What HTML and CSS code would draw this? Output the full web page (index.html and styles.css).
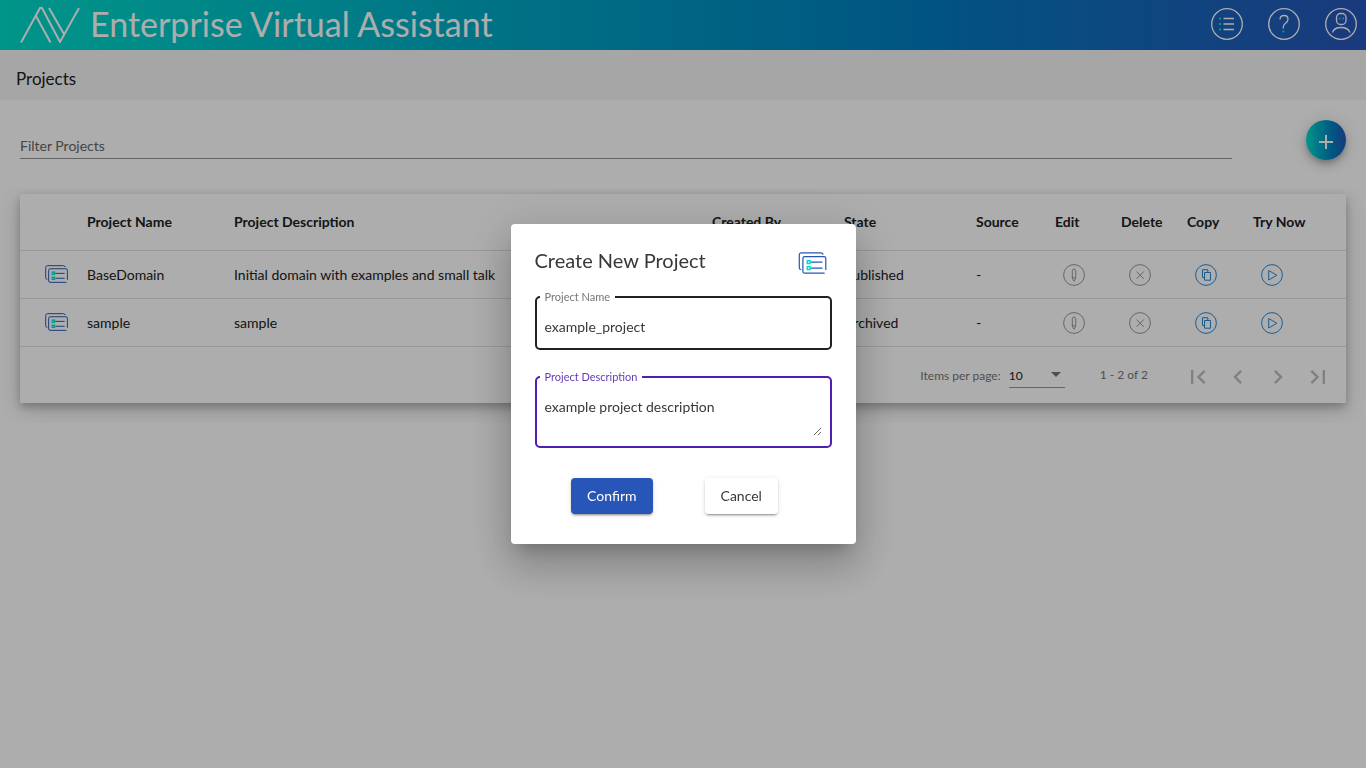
FILE: index.html
```html
<!DOCTYPE html>
<html lang="en">
<head>
<meta charset="utf-8">
<meta name="viewport" content="width=device-width, initial-scale=1">
<title>Enterprise Virtual Assistant</title>
<link rel="stylesheet" href="styles.css">
</head>
<body>
<svg class="sprite" aria-hidden="true">
  <symbol id="project" viewBox="0 0 28 22">
    <g fill="none" stroke="#2755b8" stroke-width="1.2" stroke-linecap="round" stroke-linejoin="round">
      <path d="M24.5 2.2Q24 .8 22.500 .8H3Q.8 .8 .8 3V15.500Q.8 17.500 2.300 17.500"/>
      <path d="M25.700 21.200H6.200Q4.400 21.200 4.400 19.400V6.400Q4.400 4.600 6.200 4.600H25.400Q27.300 4.600 27.300 6.400V17.600"/>
      <path d="M13 10.200h10.500M13 16.200h10.500"/>
    </g>
    <g fill="none" stroke="#00dfc6" stroke-width="1.500"><path d="M8.800 8.700h2.800v2.800H8.800zM8.800 14.700h2.800v2.800H8.800z"/></g>
  </symbol>
  <symbol id="edit" viewBox="0 0 22 22">
    <g fill="none" stroke="currentColor" stroke-width="1"><circle cx="11" cy="11" r="10.400"/><path d="M9.300 6.500Q9.300 5.200 11 5.200T12.700 6.500V14L11 17.300 9.300 14zM9.300 13.800h3.400"/></g>
  </symbol>
  <symbol id="delete" viewBox="0 0 22 22">
    <g fill="none" stroke="currentColor" stroke-width="1"><circle cx="11" cy="11" r="10.400"/><path d="M7.500 7.500l7.300 7.300M14.800 7.500l-7.300 7.300"/></g>
  </symbol>
  <symbol id="copy" viewBox="0 0 22 22">
    <g fill="none" stroke="currentColor" stroke-width="1"><circle cx="11" cy="11" r="10.400"/><path d="M9.500 13.500h-2V5.700h5.300v2.600M9.500 8.500h6v7.700h-6z"/></g>
  </symbol>
  <symbol id="play" viewBox="0 0 22 22">
    <g fill="none" stroke="currentColor" stroke-width="1" stroke-linejoin="round"><circle cx="11" cy="11" r="10.400"/><path d="M7.700 6.500v9.500l8.200-4.700z"/></g>
  </symbol>
</svg>

<header class="topbar">
  <svg class="logo" viewBox="0 0 60 36" aria-hidden="true"><path d="M1 35.500L20 1h2L40 35 59 1M16 9L30.500 35.500M29 1L44.500 28"/></svg>
  <h1 class="brand">Enterprise Virtual Assistant</h1>
  <nav class="tools" aria-label="Tools">
    <button class="tool" type="button" aria-label="Menu"><svg viewBox="0 0 32 32"><circle cx="16" cy="16" r="15.300"/><path d="M12.500 10.500h10.500M12.500 16h10.500M12.500 21.500h10.500"/><path class="accent" d="M8 10.500h2M8 16h2M8 21.500h2"/></svg></button>
    <button class="tool" type="button" aria-label="Help"><svg viewBox="0 0 32 32"><circle cx="16" cy="16" r="15.300"/><path d="M12 11.500Q12 7.500 16 7.500T20 11.300Q20 13.500 17.500 15.200Q15.300 16.700 15.300 19V20.500"/><path class="accent" d="M15.300 22.500v2"/></svg></button>
    <button class="tool" type="button" aria-label="Account"><svg viewBox="0 0 32 32"><circle cx="16" cy="16" r="15.300"/><rect x="11.500" y="5.500" width="9.500" height="11" rx="4"/><path d="M7.500 24.500Q9 19.500 16 19.500T25 24.500"/><path class="accent" d="M14 10.500h1.500M17.500 10.500H19"/></svg></button>
  </nav>
</header>
<div class="crumb"><h2 class="crumb-title">Projects</h2></div>

<main>
  <div class="filterbar">
    <input class="filter" type="text" placeholder="Filter Projects" aria-label="Filter Projects">
    <button class="add" type="button" aria-label="Add project"><svg viewBox="0 0 14 14"><path d="M7 0v14M0 7h14"/></svg></button>
  </div>

  <section class="card">
    <table class="projects">
      <colgroup><col class="col-icon"><col class="col-name"><col><col class="col-meta"><col class="col-meta"><col class="col-source"><col class="col-action"><col class="col-action"><col class="col-action"><col class="col-last"></colgroup>
      <thead>
        <tr><th></th><th>Project Name</th><th>Project Description</th><th>Created By</th><th>State</th><th>Source</th><th>Edit</th><th>Delete</th><th>Copy</th><th>Try Now</th></tr>
      </thead>
      <tbody>
        <tr>
          <td><svg class="row-icon"><use href="#project"/></svg></td><td>BaseDomain</td><td>Initial domain with examples and small talk</td><td></td><td>Published</td><td>-</td>
          <td><button class="act muted" type="button" aria-label="Edit BaseDomain"><svg><use href="#edit"/></svg></button></td>
          <td><button class="act muted" type="button" aria-label="Delete BaseDomain"><svg><use href="#delete"/></svg></button></td>
          <td><button class="act" type="button" aria-label="Copy BaseDomain"><svg><use href="#copy"/></svg></button></td>
          <td><button class="act" type="button" aria-label="Try BaseDomain"><svg><use href="#play"/></svg></button></td>
        </tr>
        <tr>
          <td><svg class="row-icon"><use href="#project"/></svg></td><td>sample</td><td>sample</td><td></td><td>Archived</td><td>-</td>
          <td><button class="act muted" type="button" aria-label="Edit sample"><svg><use href="#edit"/></svg></button></td>
          <td><button class="act muted" type="button" aria-label="Delete sample"><svg><use href="#delete"/></svg></button></td>
          <td><button class="act" type="button" aria-label="Copy sample"><svg><use href="#copy"/></svg></button></td>
          <td><button class="act" type="button" aria-label="Try sample"><svg><use href="#play"/></svg></button></td>
        </tr>
      </tbody>
    </table>
    <div class="paginator">
      <label for="size">Items per page:</label>
      <span class="size-wrap">
        <select id="size" class="size"><option>10</option><option>25</option></select>
        <svg class="caret" viewBox="0 0 10 5" aria-hidden="true"><path d="M0 0h10L5 5z"/></svg>
      </span>
      <span class="range">1 - 2 of 2</span>
      <div class="pages">
        <button class="page" type="button" aria-label="First page"><svg viewBox="0 0 24 24"><path d="M18.410 16.590L13.820 12l4.590-4.590L17 6l-6 6 6 6zM6 6h2v12H6z"/></svg></button>
        <button class="page" type="button" aria-label="Previous page"><svg viewBox="0 0 24 24"><path d="M15.410 7.410L14 6l-6 6 6 6 1.410-1.410L10.830 12z"/></svg></button>
        <button class="page" type="button" aria-label="Next page"><svg viewBox="0 0 24 24"><path d="M10 6L8.590 7.410 13.170 12l-4.580 4.590L10 18l6-6z"/></svg></button>
        <button class="page" type="button" aria-label="Last page"><svg viewBox="0 0 24 24"><path d="M5.590 7.410L10.180 12l-4.590 4.590L7 18l6-6-6-6zM16 6h2v12h-2z"/></svg></button>
      </div>
    </div>
  </section>
</main>

<div class="backdrop">
  <form class="dialog" role="dialog" aria-modal="true" aria-labelledby="dialog-title">
    <div class="dialog-head">
      <h2 id="dialog-title" class="dialog-title">Create New Project</h2>
      <svg class="dialog-icon"><use href="#project"/></svg>
    </div>
    <fieldset class="field">
      <legend><label for="name">Project Name</label></legend>
      <input id="name" type="text" value="example_project">
    </fieldset>
    <fieldset class="field field-active">
      <legend><label for="desc">Project Description</label></legend>
      <textarea id="desc">example project description</textarea>
    </fieldset>
    <div class="actions">
      <button class="btn btn-primary" type="button">Confirm</button>
      <button class="btn" type="button">Cancel</button>
    </div>
  </form>
</div>
</body>
</html>
```

FILE: styles.css
```css
* { box-sizing: border-box; }

body {
  margin: 0;
  background: #fff;
  color: #212121;
  font-family: Lato, "Liberation Sans", sans-serif;
  font-size: 14px;
  line-height: 20px;
}

h1, h2 { margin: 0; font-weight: 400; }

button, input, select, textarea { font: inherit; color: inherit; }

button { padding: 0; border: 0; background: none; cursor: pointer; }

svg { display: block; }

.sprite { position: absolute; width: 0; height: 0; }

/* Top bar */
.topbar {
  display: flex;
  align-items: center;
  height: 50px;
  padding: 0 9px 0 20px;
  background: linear-gradient(to right, #00dccb, #007fc0 66%, #2755b8);
  color: #fff;
}

.logo { width: 60px; height: 36px; fill: none; stroke: #fff; stroke-width: 2; }

.brand { margin-left: 10px; padding-bottom: 2px; font-size: 34px; line-height: 48px; }

.tools { display: flex; gap: 25px; margin-left: auto; padding-bottom: 2px; }

.tool svg { width: 32px; height: 32px; fill: none; stroke: #fff; stroke-width: 1.3; }

.tool .accent { stroke: #00dfc6; stroke-width: 2; }

.crumb { height: 50px; padding: 0 16px; background: #f5f5f5; }

.crumb-title { font-size: 17px; line-height: 58px; }

/* Filter */
.filterbar {
  position: relative;
  z-index: 1;
  display: flex;
  align-items: flex-start;
  justify-content: space-between;
  gap: 74px;
  height: 88px;
  padding: 20px;
  background: #fff;
}

.filter {
  flex: 1;
  height: 25px;
  margin-top: 14px;
  padding: 0 0 2px;
  border: 0;
  border-bottom: 1px solid #949494;
  background: none;
  outline: 0;
}

.filter::placeholder { color: #666; opacity: 1; }

.add {
  display: grid;
  place-items: center;
  width: 40px;
  height: 40px;
  padding-top: 4px;
  border-radius: 50%;
  background: linear-gradient(to right, #00dccb, #007fc0 66%, #2755b8);
  box-shadow: 0 3px 5px -1px rgba(0, 0, 0, .2), 0 6px 10px 0 rgba(0, 0, 0, .14), 0 1px 18px 0 rgba(0, 0, 0, .12);
}

.add svg { width: 14px; height: 14px; stroke: #fff; stroke-width: 2; }

/* Table card */
.card {
  margin: 6px 20px 20px;
  background: #fff;
  box-shadow: 0 4px 8px 0 rgba(0, 0, 0, .2), 0 6px 20px 0 rgba(0, 0, 0, .19);
}

.projects { width: 100%; border-collapse: separate; border-spacing: 0; table-layout: fixed; }

.col-icon { width: 67px; }
.col-name { width: 147px; }
.col-meta { width: 132px; }
.col-source { width: 79px; }
.col-action { width: 66px; }
.col-last { width: 93px; }

th, td {
  height: 48px;
  padding: 0;
  border-bottom: 1px solid #e0e0e0;
  text-align: left;
  white-space: nowrap;
}

th { height: 57px; font-weight: 700; }

.row-icon { width: 23px; height: 18px; margin: 0 0 2px 25px; }

.act { display: block; padding: 0 8px; color: #2789d8; }

.act svg { width: 22px; height: 22px; }

.muted { color: #999; }

/* Paginator */
.paginator {
  display: flex;
  align-items: center;
  justify-content: flex-end;
  height: 56px;
  padding: 2px 8px 0 0;
  color: #757575;
  font-size: 12px;
}

.size-wrap { position: relative; width: 56px; margin: 0 35px 0 8px; }

.size {
  width: 100%;
  height: 24px;
  padding: 0;
  border: 0;
  border-bottom: 1px solid #949494;
  background: none;
  color: #212121;
  appearance: none;
}

.caret { position: absolute; top: 8px; right: 4px; width: 10px; height: 5px; fill: #757575; pointer-events: none; }

.range { padding-bottom: 2px; }

.pages { display: flex; margin-left: 30px; padding-top: 2px; }

.page { display: grid; place-items: center; width: 40px; height: 40px; }

.page svg { width: 28px; height: 28px; fill: #bdbdbd; }

/* Dialog */
.backdrop {
  position: fixed;
  inset: 0;
  z-index: 10;
  display: flex;
  align-items: center;
  justify-content: center;
  background: rgba(0, 0, 0, .32);
}

.dialog {
  width: 345px;
  padding: 23px 24px 30px;
  border-radius: 4px;
  background: #fff;
  box-shadow: 0 11px 15px -7px rgba(0, 0, 0, .2), 0 24px 38px 3px rgba(0, 0, 0, .14), 0 9px 46px 8px rgba(0, 0, 0, .12);
  color: #383838;
}

.dialog-head { display: flex; justify-content: space-between; padding-right: 5px; }

.dialog-title { font-size: 20px; line-height: 26px; }

.dialog-icon { width: 29px; height: 22px; margin-top: 5px; }

.field {
  min-width: 0;
  margin: 16px 0 0;
  padding: 0 8px 10px 3px;
  border: 2px solid #212121;
  border-radius: 5px;
}

.field legend { padding: 0 5px; color: #757575; font-size: 11px; line-height: 14px; }

.field input, .field textarea {
  display: block;
  width: 100%;
  padding: 0 5px;
  border: 0;
  background: none;
  outline: 0;
}

.field input { height: 20px; margin: 13px 0 1px; }

.field textarea { height: 39px; margin: 13px 0 0; resize: vertical; }

.field-active { margin-top: 20px; border-color: #4f1eb5; }

.field-active legend { color: #673ab7; }

.actions { display: flex; justify-content: center; gap: 52px; margin: 30px 17px 0 0; }

.btn {
  padding: 0 16px;
  border-radius: 4px;
  background: #fff;
  line-height: 36px;
  box-shadow: 0 3px 1px -2px rgba(0, 0, 0, .2), 0 2px 2px 0 rgba(0, 0, 0, .14), 0 1px 5px 0 rgba(0, 0, 0, .12);
}

.btn-primary { background: #2755b8; color: #fff; }
```
